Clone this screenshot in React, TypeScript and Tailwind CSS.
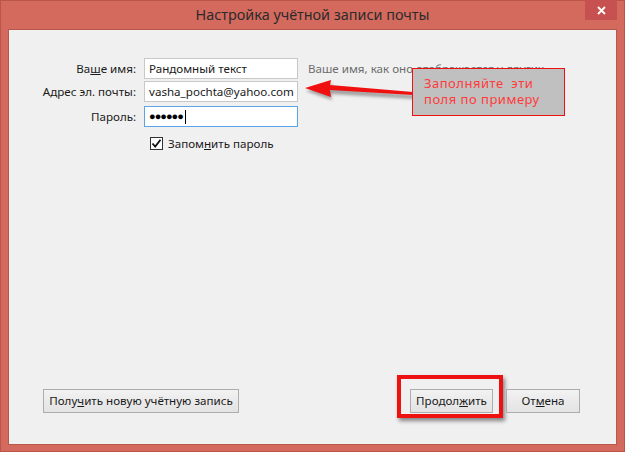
import { ReactNode } from "react";

const font = { fontFamily: '"Noto Sans", "Open Sans", sans-serif' };

function Btn({ children, className = "" }: { children: ReactNode; className?: string }) {
  return (
    <button
      className={`h-[24px] border border-[#adadad] bg-gradient-to-b from-[#f2f2f2] to-[#e3e3e3] text-[11.6px] text-[#1a1a1a] ${className}`}
    >
      {children}
    </button>
  );
}

export default function App() {
  return (
    <div
      className="w-[625px] h-[452px] bg-[#d4695e] border border-[#b95549] flex flex-col px-[7px] pb-[6px]"
      style={font}
    >
      {/* title bar */}
      <div className="relative h-[28px] flex items-center justify-center">
        <span className="text-[14.4px] text-[#2b2b2b] -mt-[1px]">Настройка учётной записи почты</span>
        <div className="absolute top-[-1px] right-0 w-[32px] h-[20px] bg-[#c75050] flex items-center justify-center">
          <svg width="9" height="9" viewBox="0 0 9 9">
            <path d="M1 1 L8 8 M8 1 L1 8" stroke="white" strokeWidth="1.8" />
          </svg>
        </div>
      </div>

      {/* content */}
      <div className="relative flex-1 bg-[#f0f0f0] border border-[#b7584d] flex flex-col text-[11.6px] text-[#1a1a1a]">
        <div className="pt-[28px] flex flex-col">
          <div className="flex items-center h-[21px]">
            <div className="w-[127px] text-right">
              Ва<u>ш</u>е имя:
            </div>
            <div className="ml-[8px] w-[154px] h-[21px] bg-white border border-[#c8c8c8] px-[4px] flex items-center">
              Рандомный текст
            </div>
            <div className="ml-[10px] text-[#6d6d6d] whitespace-nowrap">Ваше имя, как оно отображается у других</div>
          </div>
          <div className="flex items-center h-[21px] mt-[2px]">
            <div className="w-[127px] text-right">Адрес эл. почты:</div>
            <div className="ml-[8px] w-[154px] h-[21px] bg-white border border-[#c8c8c8] px-[4px] flex items-center">
              vasha_pochta@yahoo.com
            </div>
          </div>
          <div className="flex items-center h-[21px] mt-[4px]">
            <div className="w-[127px] text-right">Пароль:</div>
            <div className="ml-[8px] w-[154px] h-[21px] bg-white border border-[#5aa4e6] px-[4px] flex items-center">
              <span className="text-[11px] tracking-[-1px] text-black">●●●●●●</span>
              <span className="w-[1px] h-[14px] bg-black ml-[2px]" />
            </div>
          </div>
          <div className="flex items-center mt-[8px] ml-[141px]">
            <div className="w-[13px] h-[13px] bg-white border border-[#333] flex items-center justify-center">
              <svg width="11" height="11" viewBox="0 0 11 11">
                <path d="M1.5 5.5 L4.2 8.5 L9.5 1.8" stroke="#111" strokeWidth="1.8" fill="none" />
              </svg>
            </div>
            <span className="ml-[5px]">
              Запом<u>н</u>ить пароль
            </span>
          </div>
        </div>

        <div className="flex-1" />

        <div className="flex items-center pb-[31px] pl-[34px] pr-[36px]">
          <Btn className="w-[196px]">
            Полу<u>ч</u>ить новую учётную запись
          </Btn>
          <div className="flex-1" />
          <div className="pl-[9px] pt-[10px] pr-[6px] pb-[1px] border-[4px] border-[#ee1111] shadow-[2px_3px_4px_rgba(0,0,0,0.45)] -ml-[13px] -mt-[14px] -mr-[10px] -mb-[5px]">
            <Btn className="w-[83px]">
              Продол<u>ж</u>ить
            </Btn>
          </div>
          <Btn className="w-[74px] ml-[13px]">
            От<u>м</u>ена
          </Btn>
        </div>

        {/* callout and arrow overlay */}
        <svg className="absolute left-[292px] top-[46px]" width="120" height="30" viewBox="0 0 120 30">
          <defs>
            <filter id="sh" x="-20%" y="-50%" width="140%" height="200%">
              <feGaussianBlur stdDeviation="1.5" />
            </filter>
          </defs>
          <path d="M4 13 L30 5 L29 10 L112 17 L112 21 L29 16 L30 22 Z" fill="#555" opacity="0.5" filter="url(#sh)" transform="translate(1,2)" />
          <path d="M4 12 L30 4 L29 9 L112 16 L112 19 L29 14 L30 21 Z" fill="#f01010" />
        </svg>
        <div className="absolute left-[403px] top-[38px] w-[153px] h-[48px] bg-[#c0c0c0] border border-[#f01010] pl-[11px] pt-[6px] text-[13px] leading-[16px] text-[#ff3b3b] tracking-[0.5px]">
          <div>Заполняйте&nbsp; эти</div>
          <div>поля по примеру</div>
        </div>
      </div>
    </div>
  );
}
